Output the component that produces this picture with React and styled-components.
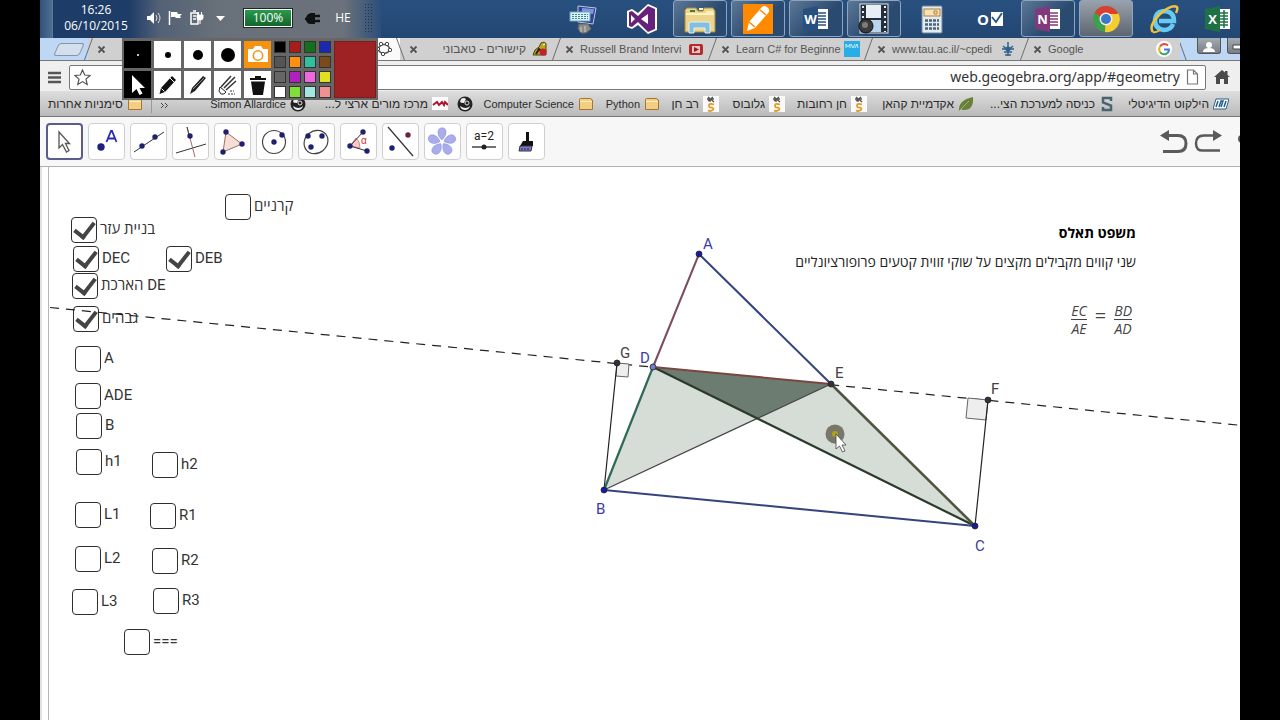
import React from "react";
import styled, { createGlobalStyle } from "styled-components";

const GlobalStyle = createGlobalStyle`
  * { box-sizing: border-box; }
  body { margin: 0; background: #000; font-family: "Liberation Sans", sans-serif; }
  button { font: inherit; color: inherit; }
`;

const Screen = styled.div`
  position: relative;
  display: flex;
  flex-direction: column;
  min-height: 100vh;
  margin: 0 40px;
  background: #fff;
  overflow: hidden;
`;

/* ---------- taskbar ---------- */

const Taskbar = styled.header`
  display: flex;
  height: 38px;
  background: linear-gradient(#28507f, #234773);
  color: #fff;
  font: 12px/16px "Open Sans", sans-serif;
`;
const ShowDesktop = styled.button`
  width: 13px;
  padding: 0;
  border: 0;
  border-right: 1px solid #5b7899;
  background: linear-gradient(90deg, #32527c, #4f6e92);
`;
const Clock = styled.time`
  display: flex;
  flex-direction: column;
  align-items: center;
  width: 76px;
  padding: 2px 0 0 10px;
  background: #1d3c68;
`;
const Tray = styled.div`
  display: flex;
  align-items: center;
  gap: 4px;
  flex: none;
  padding: 0 7px 2px 15px;
  background: linear-gradient(90deg, #1d3c68, #536176 12%, #687079 35%, #6c727b 85%, #2c4e7a);
`;
const TrayButton = styled.button`
  display: flex;
  flex: none;
  justify-content: center;
  width: ${(p) => p.$w || 18}px;
  padding: 0;
  border: 0;
  background: none;
`;
const Battery = styled.div`
  flex: none;
  width: 48px;
  margin: 0 8px 0 10px;
  border: 1px solid #fff;
  outline: 1px solid #1b2a1f;
  background: linear-gradient(#2a9a4c, #12662c);
  text-align: center;
`;
const Apps = styled.nav`
  display: flex;
  gap: 4px;
  margin-left: auto;
`;
const AppButton = styled.button`
  display: flex;
  align-items: center;
  justify-content: center;
  width: ${(p) => (p.$last ? 45 : 54)}px;
  height: 37px;
  padding: 0;
  border: 1px solid ${(p) => (p.$open ? "#8fa5bd" : "transparent")};
  border-radius: 3px;
  background: ${(p) =>
    p.$active
      ? "linear-gradient(#9aa1ab, #5c6571)"
      : p.$open
      ? "linear-gradient(135deg, #5d7896, #2a4a70 60%)"
      : "none"};
`;

/* ---------- browser ---------- */

const TabStrip = styled.div`
  display: flex;
  justify-content: flex-end;
  height: 23px;
  background: #bdd7f5;
  border-bottom: 1px solid #777;
  overflow: hidden;
`;
const NewTab = styled.button`
  width: 26px;
  height: 13px;
  margin: 5px auto 0 16px;
  padding: 0;
  border: 1px solid #8794a5;
  border-radius: 3px;
  background: #d3dfec;
  transform: skewX(-24deg);
`;
const Tab = styled.div`
  display: flex;
  align-items: center;
  flex: none;
  width: 156px;
  padding-right: 8px;
  background: ${(p) => (p.$active ? "#fafafa" : "#d0d0d0")};
  color: #555;
  font-size: ${(p) => (p.$rtl ? 12 : 11)}px;
  line-height: 16px;
`;
const TabEdge = styled.span`
  flex: none;
  width: 1px;
  height: 24px;
  margin-right: 8px;
  background: #6d6d6d;
  transform: skewX(${(p) => (p.$back ? 20 : -20)}deg);
`;
const TabTitle = styled.span`
  flex: 1;
  margin: 0 ${(p) => (p.$rtl ? 6 : 0)}px 0 4px;
  overflow: hidden;
  white-space: nowrap;
  direction: ${(p) => (p.$rtl ? "rtl" : "ltr")};
`;
const TabClose = styled.button`
  display: flex;
  flex: none;
  width: 11px;
  padding: 0;
  border: 0;
  background: none;
`;
const WindowControls = styled.div`
  display: flex;
  flex: none;
  gap: 6px;
  width: 60px;
  padding-left: 2px;
  overflow: hidden;
`;
const WindowButton = styled.button`
  display: flex;
  align-items: flex-end;
  justify-content: center;
  flex: 0 0 24px;
  height: 16px;
  padding: 0;
  border: 1px solid #555;
  border-top: 0;
  border-radius: 0 0 3px 3px;
  background: linear-gradient(#a5abb2, #777e86);
`;
const AddressRow = styled.div`
  display: flex;
  align-items: center;
  gap: 8px;
  height: 30px;
  padding: 2px 10px 0 8px;
  background: #efefef;
`;
const IconButton = styled.button`
  display: flex;
  padding: 0;
  border: 0;
  background: none;
`;
const UrlBox = styled.div`
  display: flex;
  align-items: center;
  flex: 1;
  height: 25px;
  padding: 0 5px 0 4px;
  border: 1px solid #777;
  border-radius: 2px;
  background: #fff;
`;
const UrlInput = styled.input`
  flex: 1;
  min-width: 0;
  margin: 0 4px;
  padding: 0;
  border: 0;
  background: none;
  color: #333;
  font: 14px/20px "Noto Sans", sans-serif;
  text-align: right;
`;
const Bookmarks = styled.nav`
  display: flex;
  align-items: center;
  direction: rtl;
  height: 26px;
  padding: 0 11px 0 8px;
  background: linear-gradient(#dedede, #b9b9b9);
  border-bottom: 1px solid #777;
  overflow: hidden;
`;
const Bookmark = styled.a`
  display: flex;
  align-items: center;
  flex: 0 0 ${(p) => (p.$w ? p.$w + "px" : "auto")};
  gap: 4px;
  color: #2c2c2c;
  font-size: ${(p) => (p.$latin ? 11 : 12)}px;
  line-height: 16px;
  text-decoration: none;
  white-space: nowrap;
`;
const More = styled.button`
  margin: 0 auto 0 8px;
  padding: 0;
  border: 0;
  background: none;
`;
const Rule = styled.span`
  width: 1px;
  height: 18px;
  margin-left: 8px;
  background: #999;
`;

/* ---------- drawing palette ---------- */

const Palette = styled.section`
  position: absolute;
  left: 82px;
  top: 38px;
  display: flex;
  gap: 3px;
  padding: 3px 2px 2px;
  background: #666;
`;
const Tools = styled.div`
  display: grid;
  grid-template-columns: repeat(5, 27px);
  grid-auto-rows: 27px;
  gap: 3px;
`;
const Tool = styled.button`
  display: flex;
  align-items: center;
  justify-content: center;
  padding: 0;
  border: 0;
  background: ${(p) => p.$bg || "#fff"};
`;
const Dot = styled.span`
  width: ${(p) => p.$d}px;
  height: ${(p) => p.$d}px;
  border-radius: 50%;
  background: ${(p) => p.$c || "#000"};
`;
const Swatches = styled.div`
  display: grid;
  grid-template-columns: repeat(4, 12px);
  grid-auto-rows: 12px;
  gap: 3px;
`;
const Swatch = styled.button`
  padding: 0;
  border: 1px solid #333;
  background: ${(p) => p.$c};
`;
const CurrentColor = styled.div`
  width: 42px;
  border: 1px solid #7c1c1c;
  background: #9e2224;
`;

/* ---------- geometry app ---------- */

const Toolbar = styled.div`
  display: flex;
  align-items: center;
  gap: 5px;
  height: 50px;
  padding: 0 0 0 6px;
  background: #f7f7f7;
  border-bottom: 1px solid #b0b0b0;
`;
const GeoTool = styled.button`
  width: 37px;
  height: 37px;
  padding: 0;
  border: ${(p) => (p.$on ? "2px solid #5b5b8c" : "1px solid #cfcfcf")};
  border-radius: 4px;
  background: #fff;
  svg { display: block; margin: ${(p) => (p.$on ? "-2px" : "-1px")}; }
`;
const History = styled.div`
  display: flex;
  gap: 6px;
  margin-left: auto;
`;
const Canvas = styled.main`
  position: relative;
  flex: 1;
  min-height: 553px;
  border-left: 2px solid #e2e2e2;
  overflow: hidden;
`;
const Figure = styled.svg`
  position: absolute;
  inset: 0 auto auto -2px;
  width: calc(100% + 2px);
  height: 100%;
  font: 15px Roboto, sans-serif;
`;
const CheckItem = styled.label`
  position: absolute;
  left: ${(p) => p.$x}px;
  top: ${(p) => p.$y}px;
  display: flex;
  gap: 3px;
  color: #333;
  font: 15px/24px Roboto, "Open Sans", sans-serif;
  white-space: nowrap;
`;
const Check = styled.input`
  appearance: none;
  width: 26px;
  height: 26px;
  margin: 0;
  border: 1px solid #2e2e2e;
  border-radius: 4px;
  background: #fff;
  display: grid;
  place-items: center;
  &:checked::after {
    content: "";
    width: 9px;
    height: 16px;
    margin-bottom: 4px;
    border: solid #444;
    border-width: 0 4px 4px 0;
    transform: rotate(38deg);
  }
`;
const Theorem = styled.section`
  position: absolute;
  left: 700px;
  top: 56px;
  width: 394px;
  direction: rtl;
  color: #222;
  font: 14px/20px "Open Sans", sans-serif;
`;
const TheoremTitle = styled.h1`
  margin: 0 0 9px;
  color: #000;
  font-size: 14px;
  line-height: 20px;
`;
const TheoremText = styled.p`
  margin: 0 0 30px;
  white-space: nowrap;
`;
const Equation = styled.div`
  display: flex;
  align-items: center;
  justify-content: flex-end;
  gap: 8px;
  padding-right: 4px;
  direction: ltr;
  color: #444;
`;
const Equals = styled.span`
  padding-bottom: 8px;
  font-size: 20px;
  line-height: 20px;
`;
const Fraction = styled.span`
  display: flex;
  flex-direction: column;
  font: italic 14px/17px "Open Sans", sans-serif;
  text-align: center;
`;
const Numerator = styled.span`
  border-bottom: 1px solid #444;
`;

/* ---------- icons ---------- */

const Svg = ({ w = 16, h = w, vb, children }) => (
  <svg width={w} height={h} viewBox={vb || `0 0 ${w} ${h}`} fill="none" aria-hidden="true">
    {children}
  </svg>
);

const Close = () => (
  <Svg w={9}><path d="M1.500 1.500l6 6M7.500 1.500l-6 6" stroke="#555" strokeWidth="1.800" /></Svg>
);
const Folder = () => (
  <Svg w={16}>
    <path d="M1.500 3.500q0-1 1-1h10q1 0 1.200 1.500h.8v9.500h-13z" fill="#f3cf86" stroke="#a8772f" />
    <path d="M2 5.500h12" stroke="#fff0c4" />
  </Svg>
);
const Squiggle = () => (
  <Svg w={16}>
    <rect width="16" height="16" fill="#fafafa" />
    <path d="M5 1l6 5M5 5l5-4M4 3h7M7 3v3" stroke="#555" strokeWidth="1.300" />
    <path d="M11 8.500q-5-1.500-5 1t3 2q3 1 0 3q-2 1-4 0" stroke="#e39b22" strokeWidth="1.800" />
  </Svg>
);
const Moon = () => (
  <Svg w={16}>
    <circle cx="8" cy="8" r="7.500" fill="#222" />
    <path d="M3 10q6 4 10 0q-1 4-5 4q-4 0-5-4zM4 3q3-2 5 0l-2 4q-3 0-4-1z" fill="#eee" />
    <circle cx="10" cy="7" r="2" stroke="#ddd" />
  </Svg>
);
const Wave = () => (
  <Svg w={16}>
    <rect y="1" width="16" height="13" fill="#fff" />
    <path d="M1 9l4-3 2 3 3-3 2 3 1-3 3 3" stroke="#b3122c" strokeWidth="2" />
  </Svg>
);
const Leaf = () => (
  <Svg w={16}>
    <path d="M1 15q-1-11 14-14q1 13-9 13q-2 0-3-1z" fill="#69803a" />
    <path d="M2 14L11 5" stroke="#a2b173" />
  </Svg>
);
const SLogo = () => (
  <Svg w={16}>
    <path d="M12 5V2H4v4.500l8 3V14H4v-3" stroke="#49646f" strokeWidth="2.500" />
  </Svg>
);
const BlueLogo = () => (
  <Svg w={16}>
    <path d="M3 3h13l-3 10H0z" fill="#fff" stroke="#2f5e86" />
    <path d="M3 11l2-6M6 11l2-6h2l-2 6M11 11l2-6" stroke="#225d90" strokeWidth="1.500" />
  </Svg>
);

const Toucan = () => (
  <Svg w={16}>
    <path d="M1 14Q2 8 7 6l2-4q4-2 5 1v11z" fill="#bfa71c" stroke="#4a4415" />
    <path d="M4 13l3-5 3 3" stroke="#222" strokeWidth="2" />
    <circle cx="11" cy="11" r="3.500" fill="#c3202c" />
    <path d="M11 4l2-1" stroke="#fff" />
  </Svg>
);
const Video = () => (
  <Svg w={16}>
    <rect x="1" y="3" width="14" height="11" rx="2" fill="#b52a2f" />
    <rect x="4" y="5" width="8" height="7" fill="#e9c2c2" />
    <path d="M6 6l5 2.500-5 2.500z" fill="#9b1c22" />
  </Svg>
);
const Mva = () => (
  <Svg w={16}>
    <rect width="16" height="16" fill="#28aee6" />
    <path d="M2 7V3l2 3 2-3v4M7 3l2 4 2-4M11 7l2-4 1 4" stroke="#d9f2ff" strokeWidth=".9" />
  </Svg>
);
const Tau = () => (
  <Svg w={16}>
    <path d="M8 1v14M3 5l5 4 5-4M2 8h12M4 11h8M5 14h6" stroke="#2f618c" strokeWidth="1.500" />
    <circle cx="8" cy="8" r="2.500" fill="#2f618c" />
  </Svg>
);
const Google = () => (
  <Svg w={16}>
    <circle cx="8" cy="8" r="8" fill="#fff" />
    <path d="M12 4.500A5 5 0 004 5.500" stroke="#e5493a" strokeWidth="2" />
    <path d="M4 5.500a5 5 0 000 5.500" stroke="#f2b21b" strokeWidth="2" />
    <path d="M4 11a5 5 0 007.500 1" stroke="#3aa757" strokeWidth="2" />
    <path d="M8 8.500h5q0 2-1.500 3.500" stroke="#4178dc" strokeWidth="2" />
  </Svg>
);
const Geo = () => (
  <Svg w={16}>
    <ellipse cx="8" cy="8" rx="5.500" ry="4.500" stroke="#555" strokeWidth="1.500" />
    {[[5, 3], [11, 3], [14, 9], [7, 13], [2, 8]].map(([x, y]) => (
      <circle key={x} cx={x} cy={y} r="1.700" fill="#fff" stroke="#444" />
    ))}
  </Svg>
);

const PcIcon = () => (
  <Svg w={32}>
    <path d="M10 3l18 2-3 16-15-2z" fill="#343f9a" stroke="#b9c9dd" />
    <path d="M14 5l12 1-1 5-11-1z" fill="#7d97d6" />
    <rect x="2" y="9" width="20" height="9" fill="#d9f3f6" stroke="#72a2b8" />
    <path d="M4 11.500h16M4 13.500h16M4 15.500h16" stroke="#3f8797" strokeDasharray="2 1" />
    <path d="M11 21h9l3 5-5 4h-5l-3-4z" fill="#8b8b85" stroke="#666" />
    <path d="M13 24v5M17 23v6" stroke="#ccc" />
  </Svg>
);
const VsIcon = () => (
  <Svg w={32}>
    <path d="M22 1l9 4v22l-9 4-10-9-6 4-5-2V8l5-2 6 4z" fill="#fff" />
    <path fillRule="evenodd" d="M22 3l7 3v20l-7 3-10-10-6 5-3-1V9l3-1 6 5zM22 11l-7 5 7 5zM5 12v8l4-4z" fill="#68217a" />
  </Svg>
);
const ExplorerIcon = () => (
  <Svg w={32}>
    <path d="M1 7l2-2h9l2 3h5l1-3h9l2 3v21H1z" fill="#ecd58a" stroke="#a48a47" />
    <path d="M2 11h28M15 6h4M22 9h7" stroke="#fff3bd" strokeWidth="2" />
    <path d="M5 30v-9q0-2 2-2h17q2 0 2 2v9h-5v-5H10v5z" fill="#82bede" stroke="#dff1f8" />
    <path d="M6 8h5" stroke="#3c7e50" strokeWidth="2" />
  </Svg>
);
const PencilApp = () => (
  <Svg w={30}>
    <rect width="30" height="30" fill="#ff8a00" />
    <path d="M4 27l2-9L19 3q2-2 5 0t2 5L12 24z" fill="#fff" />
    <path d="M17 6l6 5M6 18l6 5" stroke="#ff8a00" strokeWidth="1.500" />
  </Svg>
);
const OfficeIcon = ({ letter, color, lines }) => (
  <Svg w={28} h={26}>
    <rect x="13" y="3" width="13" height="20" fill="#fff" />
    <path d="M16 7h8M16 10h8M16 13h8M16 16h8M16 19h8" stroke={color} strokeWidth="1.500" />
    {lines && <path d="M20 4v18" stroke={color} strokeWidth="1.500" />}
    <path d="M1 3l15-3v26L1 23z" fill={color} />
    <text x="8.500" y="18" fill="#fff" textAnchor="middle" fontFamily="Open Sans, sans-serif" fontSize="13" fontWeight="700">{letter}</text>
  </Svg>
);
const OutlookIcon = () => (
  <Svg w={28} h={26}>
    <text x="7" y="19" fill="#fff" textAnchor="middle" fontFamily="Open Sans, sans-serif" fontSize="15" fontWeight="700">O</text>
    <rect x="15" y="6" width="12" height="14" fill="#fff" />
    <path d="M16 11l4 5 6-9" stroke="#245581" strokeWidth="1.800" />
  </Svg>
);
const FilmIcon = () => (
  <Svg w={32}>
    <rect x="2" y="1" width="28" height="29" fill="#26303c" stroke="#dce6f0" />
    <rect x="8" y="2" width="15" height="13" fill="#e7eef4" />
    <rect x="8" y="17" width="15" height="12" fill="#b9d4ec" />
    <path d="M5 3v26M27 3v26" stroke="#e7edf3" strokeWidth="2" strokeDasharray="2 3" />
    <circle cx="8" cy="23" r="7" fill="#3b3b3b" stroke="#111" />
    <circle cx="7" cy="22" r="3" fill="#7c7c7c" />
  </Svg>
);
const CalcIcon = () => (
  <Svg w={24} h={30}>
    <rect x="2" y="2" width="20" height="27" rx="1" fill="#e4ebef" stroke="#70869a" />
    <rect x="4" y="5" width="16" height="7" fill="#f8e2b7" stroke="#b2803c" />
    <path d="M14 7h3v3h-3z" stroke="#b2803c" />
    <path d="M5 16.500h14M5 20.500h14M5 24.500h14" stroke="#49647b" strokeWidth="2.500" strokeDasharray="3 1" />
  </Svg>
);
const ChromeIcon = () => (
  <Svg w={28}>
    <circle cx="14" cy="14" r="13" fill="#3da14b" />
    <path d="M14 8h12.200A13 13 0 0113 27z" fill="#f7cd2d" />
    <path d="M14 14L2.500 8A13 13 0 0126 9H14z" fill="#d9402f" />
    <circle cx="14" cy="14" r="6.500" fill="#eee" />
    <circle cx="14" cy="14" r="5" fill="#3c78c8" />
  </Svg>
);
const IeIcon = () => (
  <Svg w={30}>
    <path d="M24 20q-2 6-9 6-9-1-9-10 1-9 10-9 9 1 9 10H10" stroke="#67caf3" strokeWidth="4.500" />
    <path d="M4 28Q-1 22 11 10 23 0 28 3q1 2-1 6" stroke="#f0c33a" strokeWidth="2.500" />
    <path d="M4 28q3 1 7-2" stroke="#f0c33a" strokeWidth="2" />
  </Svg>
);

const SpeakerIcon = () => (
  <Svg w={16}>
    <path d="M2 6h3l4-4v12L5 10H2z" fill="#fff" />
    <path d="M11 5q2 3 0 6M13 3q4 5 0 10" stroke="#ddd" />
  </Svg>
);
const FlagIcon = () => (
  <Svg w={16}>
    <path d="M2.500 1v14" stroke="#fff" strokeWidth="1.500" />
    <path d="M4 2h6l1 2h4l-2 2 1 2H9L8 7H4z" fill="#fff" />
  </Svg>
);
const PowerIcon = () => (
  <Svg w={16}>
    <rect x="2" y="3" width="7" height="11" stroke="#fff" strokeWidth="1.500" />
    <path d="M4 1h3M4 6h3M4 9h3" stroke="#fff" strokeWidth="1.500" />
    <path d="M8 5h6v3q0 2-3 2t-3-2zM11 10v4M9.500 5V2M12.500 5V2" fill="#fff" stroke="#fff" />
  </Svg>
);
const PlugIcon = () => (
  <Svg w={16}>
    <path d="M1 9q0-5 5-6h4v11H6q-5 0-5-5z" fill="#111" />
    <path d="M10 6h5M10 11h5M0 9h3" stroke="#111" strokeWidth="2.500" />
  </Svg>
);

const Pt = ({ x, y, c = "#20206e" }) => <circle cx={x} cy={y} r="2.700" fill={c} />;

const geoTools = [
  ["Move", <path d="M13 9v16l3.500-3.500 4 7.500 2.500-1.500-3.500-7h4z" stroke="#555" strokeWidth="1.300" fill="#fff" />],
  ["Point", <>
    <circle cx="13" cy="24" r="3.700" fill="#202080" />
    <path d="M18.500 19l4.500-11h1l4.500 11M20.500 15.500h6" stroke="#2a2ab0" strokeWidth="1.800" />
  </>],
  ["Line", <><path d="M4 29L34 9" stroke="#333" /><Pt x={12} y={23} /><Pt x={25} y={14} /></>],
  ["Perpendicular line", <>
    <path d="M4 30l30-9" stroke="#333" /><path d="M15 4l8 30" stroke="#a66" /><path d="M15 4l2 8" stroke="#444" /><Pt x={18} y={13} />
  </>],
  ["Polygon", <>
    <path d="M12 9l16 12L9 29z" fill="#f3dfd5" stroke="#a66e5c" /><Pt x={12} y={9} /><Pt x={28} y={21} /><Pt x={9} y={29} />
  </>],
  ["Circle", <><circle cx="18" cy="19" r="11.500" stroke="#444" strokeWidth="1.200" /><Pt x={18} y={19} /><Pt x={26} y={12} /></>],
  ["Conic", <>
    <ellipse cx="18" cy="19" rx="12.500" ry="11" transform="rotate(-40 18 19)" stroke="#444" strokeWidth="1.200" />
    <Pt x={10} y={13} /><Pt x={24} y={13} /><Pt x={13} y={24} />
  </>],
  ["Angle", <>
    <path d="M10 23l6-8q4 3 4 10z" fill="#f6cccc" stroke="#d88" /><path d="M23 9L10 23l17 5" stroke="#333" />
    <text x="21" y="21" fill="#c33" fontSize="10" fontFamily="Liberation Sans, sans-serif">α</text>
    <Pt x={23} y={9} /><Pt x={10} y={23} /><Pt x={27} y={28} />
  </>],
  ["Reflect", <><path d="M6 4l25 29" stroke="#333" strokeWidth="1.200" /><Pt x={26} y={12} c="#6d2436" /><Pt x={10} y={25} /></>],
  ["Flower", <>
    {[0, 72, 144, 216, 288].map((a) => (
      <path key={a} d="M18 17q-5-4-4-9q1-3 3-3q4-1 5 3q1 4-4 9z" transform={`rotate(${a} 18 19)`} fill="#a9adec" stroke="#8e93dc" strokeWidth=".6" />
    ))}
    <circle cx="18" cy="19" r="1.500" fill="#fff" />
  </>],
  ["Slider", <>
    <text x="18" y="17" textAnchor="middle" fill="#222" fontSize="12" fontFamily="Roboto, sans-serif">a=2</text>
    <path d="M6 24h24" stroke="#444" strokeWidth="1.500" /><circle cx="18" cy="24" r="2.500" fill="#222" />
  </>],
  ["Style", <>
    <path d="M18 9h3v9h4v5H12l3-5h3z" fill="#111" /><path d="M12 23h12l-1 5H11z" fill="#7a78d0" stroke="#333" /><path d="M13 26h9" stroke="#222" strokeDasharray="2 1" />
  </>],
];

/* ---------- data ---------- */

const tabs = [
  { title: "ט", rtl: true },
  { title: "", icon: <Geo />, active: true },
  { title: "קישורים - טאבוני", rtl: true, icon: <Toucan />, back: true },
  { title: "Russell Brand Intervi", icon: <Video /> },
  { title: "Learn C# for Beginne", icon: <Mva /> },
  { title: "www.tau.ac.il/~cpedi", icon: <Tau /> },
  { title: "Google", icon: <Google /> },
];

const bookmarks = [
  ["הילקוט הדיגיטלי", <BlueLogo />, 114],
  ["כניסה למערכת הצי...", <SLogo />, 141],
  ["אקדמיית קהאן", <Leaf />, 107],
  ["חן רחובות", <Squiggle />, 82],
  ["גלובוס", <Squiggle />, 66],
  ["רב חן", <Squiggle />, 59],
  ["Python", <Folder />, 66, true],
  ["Computer Science", <Folder />, 121, true],
  ["", <Moon />, 25],
  ["מרכז מורים ארצי ל...", <Wave />, 142],
  ["Simon Allardice", <Moon />, 101, true],
];

const swatches = [
  "#000", "#a81c1c", "#14701c", "#1c28b0",
  "#555", "#ff9010", "#30c0a0", "#7c4a18",
  "#666", "#b020c0", "#f068e0", "#e0e020",
  "#fff", "#80e038", "#a0e8e0", "#f09090",
];

const apps = [
  ["Remote", <PcIcon />],
  ["Visual Studio", <VsIcon />],
  ["Explorer", <ExplorerIcon />, "open"],
  ["Pencil", <PencilApp />, "open"],
  ["Word", <OfficeIcon letter="W" color="#28507f" />, "open"],
  ["Movie", <FilmIcon />, "open"],
  ["Calculator", <CalcIcon />],
  ["Outlook", <OutlookIcon />],
  ["OneNote", <OfficeIcon letter="N" color="#80397b" />, "open"],
  ["Chrome", <ChromeIcon />, "active"],
  ["Internet Explorer", <IeIcon />],
  ["Excel", <OfficeIcon letter="X" color="#1e7145" lines />],
];

const checks = [
  ["קרניים", 183, 27],
  ["בניית עזר", 29, 50, true],
  ["DEC", 31, 79, true],
  ["DEB", 124, 79, true],
  ["הארכת DE", 30, 106, true],
  ["גבהים", 31, 139, true],
  ["A", 33, 179],
  ["ADE", 33, 216],
  ["B", 34, 246],
  ["h1", 34, 282],
  ["h2", 110, 285],
  ["L1", 33, 335],
  ["R1", 108, 336],
  ["L2", 33, 379],
  ["R2", 110, 381],
  ["L3", 30, 422],
  ["R3", 111, 421],
  ["===", 82, 462],
];

const points = [
  ["A", 659, 87, 663, 82, "#1a1a9c"],
  ["B", 564, 323, 556, 347, "#1a1a9c"],
  ["C", 935, 359, 935, 384, "#1a1a9c"],
  ["D", 613, 200, 600, 196, "#7878c8"],
  ["E", 791, 217, 795, 211, "#333"],
  ["F", 948, 233, 951, 227, "#333"],
  ["G", 577, 196, 580, 191, "#333"],
];

export default function App() {
  return (
    <Screen>
      <GlobalStyle />
      <Taskbar>
        <ShowDesktop aria-label="Show desktop" />
        <Clock><span>16:26</span><span>06/10/2015</span></Clock>
        <Tray>
          <TrayButton aria-label="Volume"><SpeakerIcon /></TrayButton>
          <TrayButton aria-label="Notifications"><FlagIcon /></TrayButton>
          <TrayButton aria-label="Power"><PowerIcon /></TrayButton>
          <TrayButton aria-label="More icons" $w={20}><Svg w={9} h={5}><path d="M0 0h9L4.500 5z" fill="#fff" /></Svg></TrayButton>
          <Battery>100%</Battery>
          <TrayButton aria-label="Charging"><PlugIcon /></TrayButton>
          <TrayButton $w={34}>HE</TrayButton>
          <Svg w={10} h={28}>
            {[1, 4, 7].map((x) => <path key={x} d={`M${x + 0.5} 0v28`} stroke="#26303d" strokeDasharray="1 2" />)}
          </Svg>
        </Tray>
        <Apps aria-label="Applications">
          {apps.map(([name, icon, state], i) => (
            <AppButton key={name} aria-label={name} $open={!!state} $active={state === "active"} $last={i === apps.length - 1}>
              {icon}
            </AppButton>
          ))}
        </Apps>
      </Taskbar>

      <TabStrip>
        <NewTab aria-label="New tab" />
        {tabs.map((t, i) => (
          <Tab key={i} $active={t.active} $rtl={t.rtl}>
            <TabEdge $back={t.back} />
            <TabClose aria-label="Close tab"><Close /></TabClose>
            <TabTitle $rtl={t.rtl}>{t.title}</TabTitle>
            {t.icon}
          </Tab>
        ))}
        <WindowControls>
          <TabEdge $back />
          <WindowButton aria-label="Profile">
            <Svg w={14} h={12}><circle cx="7" cy="4" r="3" fill="#fff" /><path d="M1 11q0-4 6-4t6 4z" fill="#fff" /></Svg>
          </WindowButton>
          <WindowButton aria-label="Minimize">
            <Svg w={16} h={9}><path d="M2 1h12v4H2z" fill="#fff" stroke="#444" /></Svg>
          </WindowButton>
        </WindowControls>
      </TabStrip>

      <AddressRow>
        <IconButton aria-label="Menu">
          <Svg w={13}><path d="M0 2h13M0 6.500h13M0 11h13" stroke="#555" strokeWidth="2.500" /></Svg>
        </IconButton>
        <UrlBox>
          <IconButton aria-label="Bookmark this page">
            <Svg w={17}><path d="M8.500 1l2.200 5 5.300.5-4 3.600 1.200 5.400-4.700-2.900-4.700 2.900L5 10.100 1 6.500 6.300 6z" stroke="#555" strokeWidth="1.200" /></Svg>
          </IconButton>
          <UrlInput aria-label="Address" defaultValue="web.geogebra.org/app/#geometry" />
          <Svg w={16}><path d="M3.500 1h6l4 4v10h-10zM9.500 1v4h4" stroke="#777" strokeWidth="1.200" /></Svg>
        </UrlBox>
        <IconButton aria-label="Home">
          <Svg w={16}><path d="M0 8l8-7 3 2.500V2h2.500v4L16 8h-2v7h-4v-5H6v5H2V8z" fill="#4a4a4a" /></Svg>
        </IconButton>
      </AddressRow>

      <Bookmarks aria-label="Bookmarks">
        {bookmarks.map(([label, icon, w, latin], i) => (
          <Bookmark key={i} href="#bookmark" aria-label={label || "Bookmark"} $w={w} $latin={latin}>{icon}{label}</Bookmark>
        ))}
        <More aria-label="More bookmarks"><Svg w={9} h={7}><path d="M1 1l2.500 2.500L1 6M5 1l2.500 2.500L5 6" stroke="#444" /></Svg></More>
        <Rule />
        <Bookmark href="#other"><Folder />סימניות אחרות</Bookmark>
      </Bookmarks>

      <Toolbar>
        {geoTools.map(([name, art], i) => (
          <GeoTool key={name} aria-label={name} $on={i === 0}>
            <Svg w={37}>{art}</Svg>
          </GeoTool>
        ))}
        <History>
          <IconButton aria-label="Undo">
            <Svg w={28} h={26}><path d="M6 6.500h12q8 0 8 8t-8 8H3" stroke="#5a5a5a" strokeWidth="3" /><path d="M0 6.500L9 1v11z" fill="#5a5a5a" /></Svg>
          </IconButton>
          <IconButton aria-label="Redo">
            <Svg w={28} h={26}><path d="M22 6.500H10q-8 0-8 8t8 7h16" stroke="#5a5a5a" strokeWidth="2.500" /><path d="M28 6.500L19 1v11z" fill="#5a5a5a" /></Svg>
          </IconButton>
          <IconButton aria-label="Help">
            <Svg w={12} h={26}><circle cx="14" cy="10" r="4" fill="#555" /></Svg>
          </IconButton>
        </History>
      </Toolbar>

      <Canvas>
        {checks.map(([label, x, y, on]) => (
          <CheckItem key={label} $x={x} $y={y}>
            <Check type="checkbox" defaultChecked={!!on} />
            {label}
          </CheckItem>
        ))}
        <Theorem>
          <TheoremTitle>משפט תאלס</TheoremTitle>
          <TheoremText>שני קווים מקבילים מקצים על שוקי זווית קטעים פרופורציונליים</TheoremText>
          <Equation>
            <Fraction><Numerator>EC</Numerator><span>AE</span></Fraction>
            <Equals>=</Equals>
            <Fraction><Numerator>BD</Numerator><span>AD</span></Fraction>
          </Equation>
        </Theorem>
        <Figure pointerEvents="none" fill="none">
          <path d="M8.500 0v3000" stroke="#b5b5b5" />
          <path d="M10 140.500L2400 377" stroke="#222" strokeWidth="1.200" strokeDasharray="9 7" />
          <path d="M577 196l12 1-1 13-12-1zM948 233l-20-2-2 20 20 2z" fill="#eee" stroke="#666" />
          <path d="M613 200L564 323 717 251zM791 217L717 251 935 359z" fill="#d6ddd6" />
          <path d="M613 200L791 217 717 251z" fill="#6d7c70" />
          <path d="M577 196L564 323M948 233L935 359" stroke="#222" strokeWidth="1.200" />
          <path d="M564 323L791 217" stroke="#444" strokeWidth="1.300" />
          <path d="M613 200L935 359" stroke="#2b3a2b" strokeWidth="2.200" />
          <path d="M659 87L791 217M564 323L935 359" stroke="#34447c" strokeWidth="2" />
          <path d="M659 87L613 200" stroke="#7b4c5c" strokeWidth="2" />
          <path d="M613 200L564 323" stroke="#2f6a56" strokeWidth="2.200" />
          <path d="M613 200L791 217" stroke="#7c4640" strokeWidth="2" />
          <path d="M791 217L935 359" stroke="#4d5440" strokeWidth="2.500" />
          {points.map(([n, x, y, tx, ty, c]) => (
            <g key={n}>
              <circle cx={x} cy={y} r="3" fill={c} stroke="#223" strokeWidth=".8" />
              <text x={tx} y={ty} fill={c === "#333" ? "#444" : "#3c3ca4"}>{n}</text>
            </g>
          ))}
          <circle cx="795" cy="267" r="9.500" fill="#77776a" />
          <circle cx="795" cy="267" r="3" fill="#aaa11c" />
          <path d="M796 267v15l3.500-3 3 6 2.500-1-3-6h4z" fill="#fff" stroke="#444" strokeWidth=".8" />
        </Figure>
      </Canvas>

      <Palette aria-label="Drawing palette">
        <Tools>
          <Tool aria-label="Finest" $bg="#000"><Dot $d={2} $c="#fff" /></Tool>
          <Tool aria-label="Fine"><Dot $d={6} /></Tool>
          <Tool aria-label="Medium"><Dot $d={10} /></Tool>
          <Tool aria-label="Thick"><Dot $d={14} /></Tool>
          <Tool aria-label="Camera" $bg="#f5920f">
            <Svg w={22}><path d="M1 5h5l2-3h6l2 3h5v13H1z" fill="#fff" /><circle cx="11" cy="11.500" r="4.700" stroke="#f5920f" strokeWidth="1.500" /></Svg>
          </Tool>
          <Tool aria-label="Pointer" $bg="#000">
            <Svg w={22}><path d="M5 1v18l4.500-4 3 6 3-1.500-3-5.500H18z" fill="#fff" /></Svg>
          </Tool>
          <Tool aria-label="Pencil">
            <Svg w={22}><path d="M2.500 20l1.500-6L15 2l4 4L8 18z" fill="#111" /><path d="M4.500 14.500l3 3M13 4l4 4" stroke="#fff" /></Svg>
          </Tool>
          <Tool aria-label="Pen">
            <Svg w={22}><path d="M3 20l2-6L16 2l3 2L8 17z" fill="#222" /><path d="M6 15L17 4" stroke="#999" /></Svg>
          </Tool>
          <Tool aria-label="Eraser">
            <Svg w={22}><path d="M4 13L14 2M7 14L18 3M9 16L19 7" stroke="#333" strokeWidth="1.500" /><path d="M3 13l6 5-2 2H4l-2-3z" fill="#fff" stroke="#222" /><path d="M11 20h7M13 17h4" stroke="#333" strokeDasharray="2 1" /></Svg>
          </Tool>
          <Tool aria-label="Trash">
            <Svg w={22}><path d="M3 6h16v-2h-5V2H8v2H3zM4 7.500h14L16 21H6z" fill="#111" /></Svg>
          </Tool>
        </Tools>
        <Swatches>
          {swatches.map((c) => <Swatch key={c} $c={c} aria-label={"Colour " + c} />)}
        </Swatches>
        <CurrentColor />
      </Palette>
    </Screen>
  );
}
